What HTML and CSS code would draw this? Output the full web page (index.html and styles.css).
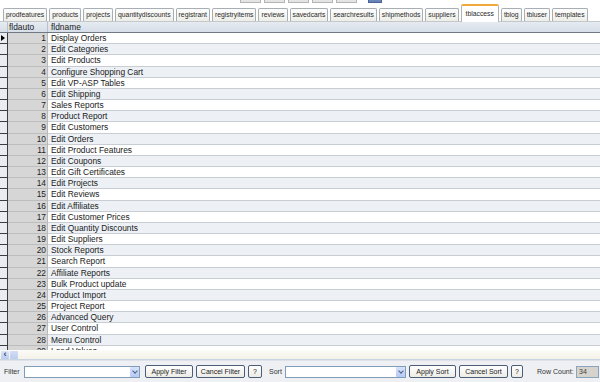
FILE: index.html
```html
<!DOCTYPE html>
<html lang="en">
  <head>
    <meta charset="UTF-8" />
    <meta name="viewport" content="width=device-width, initial-scale=1.0" />
    <title>tblaccess</title>
    <link rel="stylesheet" href="styles.css">
  </head>
  <body>
    <div class="edge">
      <span class="edge-btn"></span>
      <span class="edge-btn"></span>
      <span class="edge-btn"></span>
      <span class="edge-btn"></span>
      <span class="edge-btn"></span>
      <span class="edge-btn blue"></span>
    </div>

    <div class="tabs">
      <div class="tab">prodfeatures</div>
      <div class="tab">products</div>
      <div class="tab">projects</div>
      <div class="tab">quantitydiscounts</div>
      <div class="tab">registrant</div>
      <div class="tab">registryitems</div>
      <div class="tab">reviews</div>
      <div class="tab">savedcarts</div>
      <div class="tab">searchresults</div>
      <div class="tab">shipmethods</div>
      <div class="tab">suppliers</div>
      <div class="tab active">tblaccess</div>
      <div class="tab">tblog</div>
      <div class="tab">tbluser</div>
      <div class="tab">templates</div>
    </div>

    <div class="grid">
      <div class="head">
        <div class="sel"></div>
        <div class="num">fldauto</div>
        <div class="name">fldname</div>
      </div>
      <div class="rows" id="rows"></div>
    </div>

    <div class="hscroll">
      <span class="sbtn">&#8249;</span>
      <span class="thumb"></span>
    </div>

    <div class="bottombar">
      <span class="label filter-label">Filter</span>
      <div class="combo filter-combo"><span class="arrow"></span></div>
      <button class="btn apply-filter">Apply Filter</button>
      <button class="btn cancel-filter">Cancel Filter</button>
      <button class="btn help">?</button>
      <span class="label sort-label">Sort</span>
      <div class="combo sort-combo"><span class="arrow"></span></div>
      <button class="btn apply-sort">Apply Sort</button>
      <button class="btn cancel-sort">Cancel Sort</button>
      <button class="btn help help-sort">?</button>
      <span class="label count-label">Row Count:</span>
      <div class="count">34</div>
    </div>

    <script>
      var names = [
        "Display Orders", "Edit Categories", "Edit Products",
        "Configure Shopping Cart", "Edit VP-ASP Tables", "Edit Shipping",
        "Sales Reports", "Product Report", "Edit Customers", "Edit Orders",
        "Edit Product Features", "Edit Coupons", "Edit Gift Certificates",
        "Edit Projects", "Edit Reviews", "Edit Affiliates",
        "Edit Customer Prices", "Edit Quantity Discounts", "Edit Suppliers",
        "Stock Reports", "Search Report", "Affiliate Reports",
        "Bulk Product update", "Product Import", "Project Report",
        "Advanced Query", "User Control", "Menu Control", "Load Values"
      ];

      var html = "";
      for (var i = 0; i < names.length; i++) {
        html += '<div class="row' + (i % 2 ? " alt" : "") + '">' +
          '<div class="sel">' + (i === 0 ? '<span class="cur"></span>' : "") + "</div>" +
          '<div class="num">' + (i + 1) + "</div>" +
          '<div class="name">' + names[i] + "</div></div>";
      }
      document.getElementById("rows").innerHTML = html;
    </script>
  </body>
</html>
```

FILE: styles.css
```css
body {
  margin: 0;
  width: 600px;
  height: 382px;
  overflow: hidden;
  display: flex;
  flex-direction: column;
  background: #fff;
  font-family: "Liberation Sans", Arial, sans-serif;
  font-size: 8.4px;
  color: #1a1a1a;
}

/* clipped toolbar above the tabs */
.edge {
  height: 4px;
  flex-shrink: 0;
  display: flex;
  gap: 3px;
  padding-left: 240px;
  align-items: flex-start;
}

.edge-btn {
  width: 19px;
  height: 2px;
  background: #e4e4e4;
  border: 1px solid #b4b4b4;
  border-top: none;
}

.edge-btn.blue {
  width: 12px;
  margin-left: 8px;
  background: #6a86b8;
  border-color: #4a6296;
}

/* table tabs */
.tabs {
  height: 17px;
  flex-shrink: 0;
  display: flex;
  align-items: flex-end;
  gap: 2px;
  padding-left: 3px;
  border-bottom: 1px solid #c4c8cc;
  font-size: 6.8px;
}

.tab {
  height: 12px;
  line-height: 12px;
  padding: 0 2px;
  border: 1px solid #a7aeb4;
  border-bottom: none;
  border-radius: 2px 2px 0 0;
  background: linear-gradient(#fdfdfd, #eeeee8);
  color: #2a2a2a;
  white-space: nowrap;
}

.tab.active {
  height: 16px;
  line-height: 15px;
  margin-bottom: -1px;
  padding: 0 4px;
  background: #fff;
  border-color: #b0b4b8;
  border-top: 2px solid #f2a93b;
}

/* data grid */
.grid {
  flex: 1;
  overflow: hidden;
  display: flex;
  flex-direction: column;
}

.head {
  height: 10px;
  flex-shrink: 0;
  display: flex;
  background: linear-gradient(#e6ebf1, #d6dee8);
  border-bottom: 1px solid #6f7883;
  line-height: 10px;
}

.head .sel {
  background: transparent;
  border-bottom: none;
  border-right: 1px solid #b7c1cc;
}

.head .num {
  background: transparent;
  text-align: left;
  padding: 0 0 0 1px;
  border-right: 1px solid #b7c1cc;
  border-bottom: none;
}

.head .name {
  border-bottom: none;
}

.row {
  height: 11.18px;
  display: flex;
  box-sizing: border-box;
  line-height: 10px;
}

.sel {
  width: 7px;
  flex-shrink: 0;
  position: relative;
  background: #e9edf2;
  border-right: 1px solid #3d3d3d;
  border-bottom: 1px solid #3d3d3d;
}

.cur {
  position: absolute;
  left: 1px;
  top: 2px;
  border-left: 4px solid #000;
  border-top: 3.5px solid transparent;
  border-bottom: 3.5px solid transparent;
}

.num {
  width: 40px;
  flex-shrink: 0;
  text-align: right;
  padding-right: 1px;
  box-sizing: border-box;
  background: #d6d6d6;
  border-right: 1px solid #b9b9b9;
  border-bottom: 1px solid #bdbdbd;
  color: #222;
}

.name {
  flex: 1;
  padding-left: 3px;
  border-bottom: 1px solid #c8cdd3;
  white-space: nowrap;
}

.row.alt .name {
  background: #edf1f6;
}

/* horizontal scroll bar */
.hscroll {
  height: 10px;
  flex-shrink: 0;
  display: flex;
  gap: 1px;
  padding: 1px 0 0 1px;
  box-sizing: border-box;
  background: linear-gradient(#fbfbf7, #f4f2e8);
  border-bottom: 1px solid #c9d4e2;
}

.sbtn {
  width: 8px;
  height: 8px;
  line-height: 7px;
  text-align: center;
  font-size: 9px;
  font-weight: bold;
  color: #33456b;
  background: linear-gradient(#dbe6fb, #b9cbf0);
  border-radius: 1px;
}

.thumb {
  width: 8px;
  height: 8px;
  background: linear-gradient(#d3def6, #bcccef);
  border-radius: 1px;
}

/* filter and sort bar */
.bottombar {
  height: 22px;
  flex-shrink: 0;
  display: flex;
  align-items: center;
  background: #eef0f3;
  border-top: 1px solid #dfe3e9;
  padding-left: 4px;
  box-sizing: border-box;
  color: #333;
  font-size: 7px;
  white-space: nowrap;
}

.label {
  flex-shrink: 0;
}

.filter-label { width: 20px; }
.sort-label { width: 16px; margin-left: 4px; }
.count-label { width: 39px; margin-left: 11px; }

.combo {
  height: 12px;
  box-sizing: border-box;
  position: relative;
  background: #fff;
  border: 1px solid #7f9db9;
}

.filter-combo {
  width: 116px;
  margin-right: 5px;
}

.sort-combo {
  width: 121px;
  margin-right: 3px;
}

.arrow {
  position: absolute;
  right: 0;
  top: 0;
  width: 9px;
  height: 10px;
  background: linear-gradient(#d8e3fb, #b6c9f3);
  border-radius: 1px;
}

.arrow::after {
  content: "";
  position: absolute;
  left: 2.5px;
  top: 2px;
  width: 3px;
  height: 3px;
  border-right: 1.2px solid #4d6185;
  border-bottom: 1.2px solid #4d6185;
  transform: rotate(45deg);
}

.btn {
  height: 13px;
  margin: 0 3px 0 0;
  padding: 0;
  flex-shrink: 0;
  font-family: inherit;
  font-size: 7px;
  color: #222;
  background: linear-gradient(#ffffff, #ecebe6);
  border: 1px solid #4b5d77;
  border-radius: 2px;
  line-height: 10px;
  white-space: nowrap;
}

.apply-filter { width: 48px; }
.cancel-filter { width: 49px; }
.apply-sort { width: 47px; }
.cancel-sort { width: 49px; }
.help { width: 14px; }
.help-sort { width: 12px; }

.count {
  width: 23px;
  height: 12px;
  box-sizing: border-box;
  line-height: 10px;
  padding-left: 2px;
  background: #d6d3cc;
  border: 1px solid #8ca3bd;
  color: #444;
}
```
